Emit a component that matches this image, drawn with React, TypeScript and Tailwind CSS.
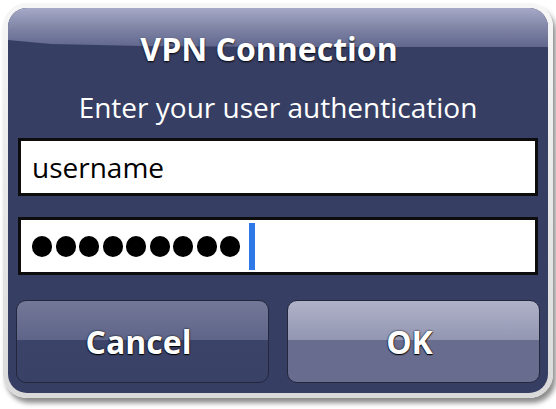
import React from "react";

const font = { fontFamily: '"Open Sans", "Noto Sans", sans-serif' };

function Field({ children }: { children: React.ReactNode }) {
  return (
    <div className="flex h-[58px] items-center border-[3px] border-[#0d0d0d] bg-white pl-[11px]">
      {children}
    </div>
  );
}

function Button({ label, primary }: { label: string; primary?: boolean }) {
  return (
    <button
      type="button"
      className={
        "flex h-[83px] items-center justify-center rounded-[10px] border-[1.5px] border-[#23273d] pr-[8px] text-[32px] font-bold text-white [text-shadow:0_0_2px_#000,0_1px_1px_#000] " +
        (primary
          ? "bg-[linear-gradient(#b0b2c8,#9296b1_48%,#686c8e_48%,#686c8e)]"
          : "bg-[linear-gradient(#737899,#5f6588_48%,#3c4369_48%,#3a4167)]")
      }
    >
      {label}
    </button>
  );
}

export default function App() {
  return (
    <div className="h-[409px] w-[556px] bg-white p-[3px]" style={font}>
      <div className="h-[395px] w-[550px] rounded-[24px] bg-[linear-gradient(#f6f6f6,#dadada)] p-[5px] shadow-[3px_5px_5px_rgba(0,0,0,0.45)]">
        <div className="relative h-full overflow-hidden rounded-[19px] bg-[#373e63]">
          {/* gloss */}
          <div className="absolute inset-x-0 top-0 h-[40px] bg-[linear-gradient(#a6a9c7,#7c81a3_55%,#60668c)] [clip-path:polygon(0_32px,8%_36px,25%_38px,50%_39px,100%_39px,100%_0,0_0)]" />

          <div className="relative flex h-full flex-col">
            <h1 className="mt-[23px] pr-[18px] text-center text-[32px] font-bold leading-[36px] text-white [text-shadow:0_1px_2px_#000]">
              VPN Connection
            </h1>
            <p className="mt-[25px] text-center text-[28px] leading-[30px] text-white">
              Enter your user authentication
            </p>

            <div className="mx-[10px] mt-[16px] flex flex-col gap-[21px]">
              <Field>
                <span className="text-[28px] leading-none text-black">username</span>
              </Field>
              <Field>
                <div className="flex items-center gap-[3.5px]">
                  {Array.from({ length: 9 }).map((_, i) => (
                    <div key={i} className="h-[21px] w-[20px] rounded-full bg-black" />
                  ))}
                </div>
                <div className="ml-[9px] h-[47px] w-[6px] bg-[#2f78e8]" />
              </Field>
            </div>

            <div className="mx-[8px] mt-[25px] grid grid-cols-2 gap-[18px]">
              <Button label="Cancel" />
              <Button label="OK" primary />
            </div>
          </div>
        </div>
      </div>
    </div>
  );
}
